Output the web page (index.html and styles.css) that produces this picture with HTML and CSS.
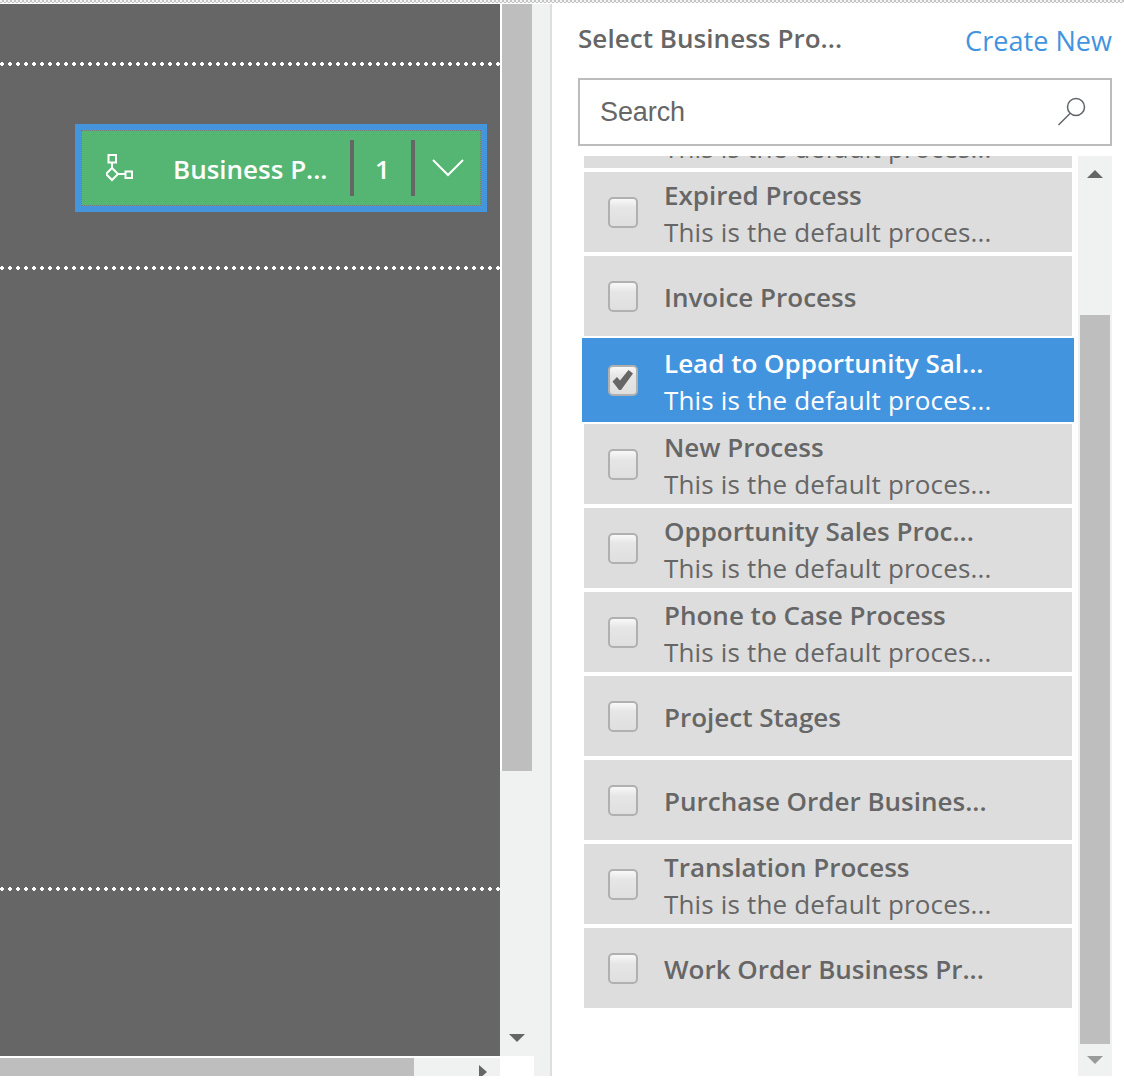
FILE: index.html
```html
<!DOCTYPE html>
<html lang="en">
<head>
<meta charset="utf-8">
<title>Select Business Process</title>
<link rel="stylesheet" href="styles.css">
</head>
<body>
<div class="topstrip"></div>
<div class="app">
  <section class="stage">
    <div class="stage-main">
      <div class="canvas">
        <div class="dots"></div>
        <div class="node">
          <div class="node-inner">
            <svg class="node-icon" width="28" height="28" viewBox="0 0 28 28" fill="none" stroke="#fff" stroke-width="2">
              <rect x="2.500" y="1" width="7.500" height="7.500"/>
              <path d="M6 8.500v6"/>
              <path d="M6 14l6 6-6 6-6-6z"/>
              <path d="M12 20h7"/>
              <rect x="19.500" y="17.500" width="6.500" height="6.500"/>
            </svg>
            <span class="node-label">Business P...</span>
            <span class="node-sep"></span>
            <span class="node-count">1</span>
            <span class="node-sep"></span>
            <svg class="node-chevron" width="32" height="20" viewBox="0 0 32 20" fill="none" stroke="#fff" stroke-width="2">
              <path d="M1 2l15 15L31 2"/>
            </svg>
          </div>
        </div>
        <div class="dots dots-b"></div>
        <div class="dots dots-c"></div>
      </div>
      <div class="vbar">
        <div class="vthumb"></div>
        <div class="vtrack"><span class="arrow-down"></span></div>
      </div>
    </div>
    <div class="stage-foot">
      <div class="hbar">
        <div class="hthumb"></div>
        <div class="htrack"><span class="arrow-right"></span></div>
      </div>
      <div class="corner"></div>
      <div class="corner-track"></div>
    </div>
  </section>
  <aside class="panel">
    <header class="panel-head">
      <h1 class="panel-title">Select Business Pro...</h1>
      <a class="panel-link">Create New</a>
    </header>
    <div class="search">
      <span class="search-text">Search</span>
      <svg width="30" height="30" viewBox="0 0 30 30" fill="none" stroke="#5f6468" stroke-width="1.500">
        <circle cx="19" cy="10" r="8.500"/>
        <path d="M13 16.500L1.500 28"/>
      </svg>
    </div>
    <div class="list-wrap">
      <div class="list">
        <div class="row row-clipped"><span class="box"></span><div class="row-text"><b>Default Process</b><span>This is the default proces...</span></div></div>
        <div class="row"><span class="box"></span><div class="row-text"><b>Expired Process</b><span>This is the default proces...</span></div></div>
        <div class="row"><span class="box"></span><div class="row-text"><b>Invoice Process</b></div></div>
        <div class="row row-on"><span class="box"><svg width="24" height="22" viewBox="0 0 24 22"><path fill="#666" d="M1.500 12.500L6 8l3 3.500L17.500 1 22 4.500 10 21H8z"/></svg></span><div class="row-text"><b>Lead to Opportunity Sal...</b><span>This is the default proces...</span></div></div>
        <div class="row"><span class="box"></span><div class="row-text"><b>New Process</b><span>This is the default proces...</span></div></div>
        <div class="row"><span class="box"></span><div class="row-text"><b>Opportunity Sales Proc...</b><span>This is the default proces...</span></div></div>
        <div class="row"><span class="box"></span><div class="row-text"><b>Phone to Case Process</b><span>This is the default proces...</span></div></div>
        <div class="row"><span class="box"></span><div class="row-text"><b>Project Stages</b></div></div>
        <div class="row"><span class="box"></span><div class="row-text"><b>Purchase Order Busines...</b></div></div>
        <div class="row"><span class="box"></span><div class="row-text"><b>Translation Process</b><span>This is the default proces...</span></div></div>
        <div class="row"><span class="box"></span><div class="row-text"><b>Work Order Business Pr...</b></div></div>
      </div>
      <div class="lbar">
        <div class="ltop"><span class="arrow-up"></span></div>
        <div class="lthumb"></div>
        <div class="lbot"><span class="arrow-down arrow-soft"></span></div>
      </div>
    </div>
  </aside>
</div>
</body>
</html>
```
FILE: styles.css
```css
* { box-sizing: border-box; }
html, body { margin: 0; height: 1083px; overflow: hidden; background: #fff; }
body { font-family: "Open Sans", "Noto Sans", sans-serif; color: #666; }

.topstrip { height: 4px; border-bottom: 1px solid #fff; background: repeating-conic-gradient(#c4c4c4 0 25%, #f4f4f4 0 50%) 0 0 / 4px 4px; background-clip: padding-box; }
.app { display: flex; height: 1072px; }

/* left stage */
.stage { width: 552px; flex: none; display: flex; flex-direction: column; border-right: 2px solid #dedede; }
.stage-main { display: flex; height: 1052px; }
.canvas { width: 500px; flex: none; background: #666; padding-top: 58px; }
.dots { height: 4px; background-image: radial-gradient(circle at 2px 2px, #fff 1.6px, transparent 2.1px); background-size: 8px 4px; }
.dots-b { margin-top: 54px; }
.dots-c { margin-top: 617px; }
.node { margin: 58px 0 0 75px; width: 412px; height: 88px; background: #4595dd; padding: 6px; }
.node-inner { height: 76px; background: #55b673; border: 1px dotted #777; display: flex; align-items: center; padding-left: 24px; }
.node-icon { flex: none; }
.node-label { width: 216px; padding: 2px 0 0 39px; color: #fff; font-size: 26px; font-weight: 600; white-space: nowrap; flex: none; }
.node-sep { width: 4px; height: 56px; background: #666; flex: none; }
.node-count { width: 57px; padding-top: 2px; text-align: center; color: #fff; font-size: 26px; font-weight: 600; flex: none; }
.node-chevron { margin-left: 17px; flex: none; }

.vbar { width: 50px; flex: none; display: flex; flex-direction: column; background: #f0f2f1; }
.vthumb { width: 32px; height: 767px; background: #bebebe; border-left: 2px solid #fff; flex: none; }
.vtrack { flex: 1; display: flex; flex-direction: column; align-items: flex-start; justify-content: flex-end; padding: 0 0 14px 9px; }

.arrow-down { display: block; width: 0; height: 0; border-left: 8px solid transparent; border-right: 8px solid transparent; border-top: 8px solid #666; }
.arrow-soft { border-top-color: #9a9a9a; }
.arrow-up { display: block; width: 0; height: 0; border-left: 8px solid transparent; border-right: 8px solid transparent; border-bottom: 8px solid #666; }
.arrow-right { display: block; width: 0; height: 0; margin-bottom: -3px; border-top: 7px solid transparent; border-bottom: 7px solid transparent; border-left: 8px solid #666; }

.stage-foot { display: flex; height: 20px; overflow: hidden; }
.hbar { width: 500px; display: flex; flex: none; padding-top: 2px; background: #fff; }
.hthumb { width: 414px; background: #bebebe; flex: none; }
.htrack { flex: 1; background: #f0f2f1; display: flex; align-items: flex-end; justify-content: flex-end; padding-right: 13px; overflow: hidden; }
.corner { width: 34px; background: #fff; flex: none; }
.corner-track { flex: 1; background: #f0f2f1; }

/* right panel */
.panel { flex: 1; min-width: 0; padding: 0 12px 0 26px; display: flex; flex-direction: column; }
.panel-head { height: 74px; display: flex; justify-content: space-between; }
.panel-title { margin: 14px 0 0; font-size: 26px; line-height: 40px; font-weight: 600; letter-spacing: .05px; color: #666; white-space: nowrap; }
.panel-link { margin-top: 17px; font-size: 27px; line-height: 40px; font-weight: 500; letter-spacing: .05px; color: #4394de; white-space: nowrap; }
.search { height: 68px; border: 2px solid #bcbcbc; background: #fff; display: flex; align-items: center; justify-content: space-between; padding: 0 23px 0 20px; }
.search-text { font-family: "Liberation Sans", Arial, sans-serif; font-size: 27px; letter-spacing: -.1px; color: #666; }

.list-wrap { display: flex; margin-top: 10px; height: 920px; }
.list { width: 496px; height: 920px; overflow: hidden; flex: none; padding-left: 4px; }
.row { width: 488px; height: 84px; margin-left: 2px; display: flex; align-items: center; background: #ddd; background-clip: content-box; padding: 2px 0; }
.row-clipped { margin-top: -70px; }
.row-on { width: 492px; margin-left: 0; background: #4394de; padding: 0; }
.row-on .row-text, .row-on .row-text b { color: #fff; }
.box { width: 30px; height: 31px; margin: 0 26px 0 24px; flex: none; border: 2px solid #b0b0b0; border-radius: 5px; background: linear-gradient(#f8f8f8 0, #e6e6e6 32%, #dfdfdf 100%); display: flex; align-items: center; justify-content: center; }
.row-on .box { margin-left: 26px; }
.row-text { display: flex; flex-direction: column; padding-top: 2px; font-size: 26px; line-height: 36px; white-space: nowrap; color: #666; }
.row-text b { font-weight: 600; }
.row-text span { margin: 1px 0 -1px; letter-spacing: .17px; }

.lbar { width: 34px; margin-left: 4px; height: 920px; background: #f0f2f1; flex: none; display: flex; flex-direction: column; padding-left: 2px; }
.ltop { height: 159px; display: flex; justify-content: center; padding: 14px 2px 0 0; }
.lthumb { width: 30px; height: 729px; background: #bebebe; flex: none; }
.lbot { flex: 1; display: flex; justify-content: center; padding: 12px 2px 0 0; }
```
